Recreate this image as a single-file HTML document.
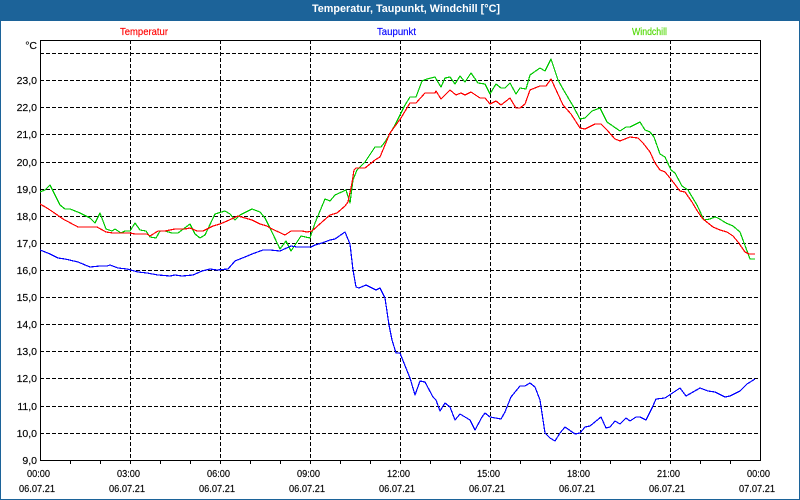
<!DOCTYPE html>
<html lang="de">
<head>
<meta charset="utf-8">
<title>Temperatur, Taupunkt, Windchill</title>
<style>
html,body{margin:0;padding:0;width:800px;height:500px;overflow:hidden;background:#fff}
svg{display:block}
text{font-family:"Liberation Sans",sans-serif;font-size:10.5px;fill:#000;stroke:#000;stroke-width:.15px}
.g{stroke:#000;stroke-width:1;stroke-dasharray:4 2;fill:none}
.a{stroke:#000;stroke-width:1;fill:none}
.c{fill:none;stroke-width:1.2;stroke-linejoin:round}
</style>
</head>
<body>
<svg width="800" height="500" viewBox="0 0 800 500" xmlns="http://www.w3.org/2000/svg">
<rect x="0" y="0" width="800" height="500" fill="#1c6399"/>
<rect x="1" y="21" width="798" height="478" fill="#fff"/>
<text x="312" y="12" textLength="188" lengthAdjust="spacingAndGlyphs" style="font-weight:bold;font-size:11px;fill:#fff;stroke:none">Temperatur, Taupunkt, Windchill [°C]</text>
<text x="120" y="35" textLength="48" lengthAdjust="spacingAndGlyphs" style="fill:#f00;stroke:#f00">Temperatur</text>
<text x="377" y="35" textLength="39" lengthAdjust="spacingAndGlyphs" style="fill:#00f;stroke:#00f">Taupunkt</text>
<text x="632" y="35" textLength="35" lengthAdjust="spacingAndGlyphs" style="fill:#4fd800;stroke:#4fd800">Windchill</text>

<g shape-rendering="crispEdges">
<path class="g" d="M40 53.5H760M40 80.5H760M40 107.5H760M40 134.5H760M40 162.5H760M40 189.5H760M40 216.5H760M40 243.5H760M40 270.5H760M40 297.5H760M40 324.5H760M40 351.5H760M40 378.5H760M40 406.5H760M40 433.5H760"/>
<path class="g" d="M130.5 40V460M220.5 40V460M310.5 40V460M400.5 40V460M490.5 40V460M580.5 40V460M670.5 40V460"/>
<path class="a" d="M40.5 40.5H760.5V460.5H40.5Z"/>
<path class="a" d="M70.5 460V464M100.5 460V464M130.5 460V464M160.5 460V464M190.5 460V464M220.5 460V464M250.5 460V464M280.5 460V464M310.5 460V464M340.5 460V464M370.5 460V464M400.5 460V464M430.5 460V464M460.5 460V464M490.5 460V464M520.5 460V464M550.5 460V464M580.5 460V464M610.5 460V464M640.5 460V464M670.5 460V464M700.5 460V464M730.5 460V464"/>

<polyline class="c" stroke="#00c800" points="40,192 45,190 50,185 60,205 65,209 70,209 80,213 90,218 95,223 100,213 106,229 112,231 115,229 121,233 125,231 130,231 135,223 140,230 146,231 150,237 156,238 160,231 165,231 172,233 178,233 190,224 195,234 200,238 205,235 215,214 225,211 230,214 235,220 240,215 252,209 260,212 265,218 270,228 280,249 286,241 291,251 301,236 310,238 315,223 325,199 330,201 335,195 346,190 350,203 353,180 357,170 365,162 375,147 381,147 385,142 395,125 405,105 410,97 416,97 422,81 427,79 435,77 441,87 445,78 450,77 455,84 460,76 465,82 471,73 478,83 485,84 490,94 496,84 501,88 505,88 510,83 516,94 520,88 526,89 530,75 540,68 545,71 551,59 558,80 563,89 573,106 580,119 585,118 592,111 600,108 607,122 620,131 626,127 630,127 640,122 645,130 650,132 654,137 660,154 665,157 671,170 675,173 682,186 688,190 697,205 704,220 710,219 715,217 718,218 726,223 733,226 740,232 750,259 755,259"/>
<polyline class="c" stroke="#f00" points="40,204 47,208 53,212 63,219 78,227 97,227 106,232 113,233 130,233 135,234 147,234 150,236 158,231 165,231 175,229 185,229 190,228 197,231 203,231 213,226 220,224 227,221 238,216 245,218 252,220 260,224 267,226 270,228 285,235 291,231 302,231 307,232 312,231 322,222 330,215 337,213 345,206 348,202 352,183 354,170 356,168 365,168 375,160 380,157 390,133 401,118 410,103 416,103 425,93 435,93 436,91 441,99 450,90 456,95 461,93 465,95 471,92 480,98 485,98 490,104 496,101 501,105 510,98 516,108 520,108 525,104 530,90 540,86 546,86 551,79 563,105 571,114 580,128 585,129 595,124 601,124 607,130 615,139 620,141 630,137 638,138 643,143 650,152 655,163 660,170 665,172 670,178 680,191 685,192 692,202 698,212 703,219 713,227 720,230 727,232 733,236 738,242 745,252 749,254 755,254"/>
<polyline class="c" stroke="#00f" points="40,250 50,254 58,258 65,259 78,262 90,267 100,266 107,266 110,265 118,268 127,269 138,272 147,273 158,275 170,276 175,275 182,276 193,275 202,271 210,269 217,270 228,269 235,261 245,257 252,254 263,250 270,250 280,251 291,246 297,247 311,247 315,245 322,243 330,240 335,239 345,232 350,244 353,270 356,287 359,288 366,285 376,290 380,288 385,298 389,325 392,340 396,353 400,353 410,378 415,395 420,381 425,382 433,397 436,400 440,411 445,403 450,407 455,420 460,414 470,420 475,430 482,417 485,413 490,417 501,419 505,412 511,397 520,386 525,386 530,383 535,387 540,400 545,433 550,438 555,441 560,433 565,427 575,434 580,433 585,427 590,426 601,417 606,428 610,427 615,421 620,424 626,418 630,421 636,417 640,417 646,420 652,408 656,399 665,398 680,388 686,396 700,388 708,391 715,392 725,397 730,396 740,391 747,384 755,379"/>
</g>

<g text-anchor="end">
<text x="37" y="49">°C</text>
<text x="37" y="84">23,0</text>
<text x="37" y="111">22,0</text>
<text x="37" y="138">21,0</text>
<text x="37" y="166">20,0</text>
<text x="37" y="193">19,0</text>
<text x="37" y="220">18,0</text>
<text x="37" y="247">17,0</text>
<text x="37" y="274">16,0</text>
<text x="37" y="301">15,0</text>
<text x="37" y="328">14,0</text>
<text x="37" y="355">13,0</text>
<text x="37" y="382">12,0</text>
<text x="37" y="410">11,0</text>
<text x="37" y="437">10,0</text>
<text x="37" y="464">9,0</text>
</g>

<g>
<text x="27" y="477" textLength="23" lengthAdjust="spacingAndGlyphs">00:00</text>
<text x="117" y="477" textLength="23" lengthAdjust="spacingAndGlyphs">03:00</text>
<text x="207" y="477" textLength="23" lengthAdjust="spacingAndGlyphs">06:00</text>
<text x="297" y="477" textLength="23" lengthAdjust="spacingAndGlyphs">09:00</text>
<text x="387" y="477" textLength="23" lengthAdjust="spacingAndGlyphs">12:00</text>
<text x="477" y="477" textLength="23" lengthAdjust="spacingAndGlyphs">15:00</text>
<text x="567" y="477" textLength="23" lengthAdjust="spacingAndGlyphs">18:00</text>
<text x="657" y="477" textLength="23" lengthAdjust="spacingAndGlyphs">21:00</text>
<text x="747" y="477" textLength="23" lengthAdjust="spacingAndGlyphs">00:00</text>
<text x="19" y="492" textLength="36" lengthAdjust="spacingAndGlyphs">06.07.21</text>
<text x="109" y="492" textLength="36" lengthAdjust="spacingAndGlyphs">06.07.21</text>
<text x="199" y="492" textLength="36" lengthAdjust="spacingAndGlyphs">06.07.21</text>
<text x="289" y="492" textLength="36" lengthAdjust="spacingAndGlyphs">06.07.21</text>
<text x="379" y="492" textLength="36" lengthAdjust="spacingAndGlyphs">06.07.21</text>
<text x="469" y="492" textLength="36" lengthAdjust="spacingAndGlyphs">06.07.21</text>
<text x="559" y="492" textLength="36" lengthAdjust="spacingAndGlyphs">06.07.21</text>
<text x="649" y="492" textLength="36" lengthAdjust="spacingAndGlyphs">06.07.21</text>
<text x="739" y="492" textLength="36" lengthAdjust="spacingAndGlyphs">07.07.21</text>
</g>
</svg>
</body>
</html>
